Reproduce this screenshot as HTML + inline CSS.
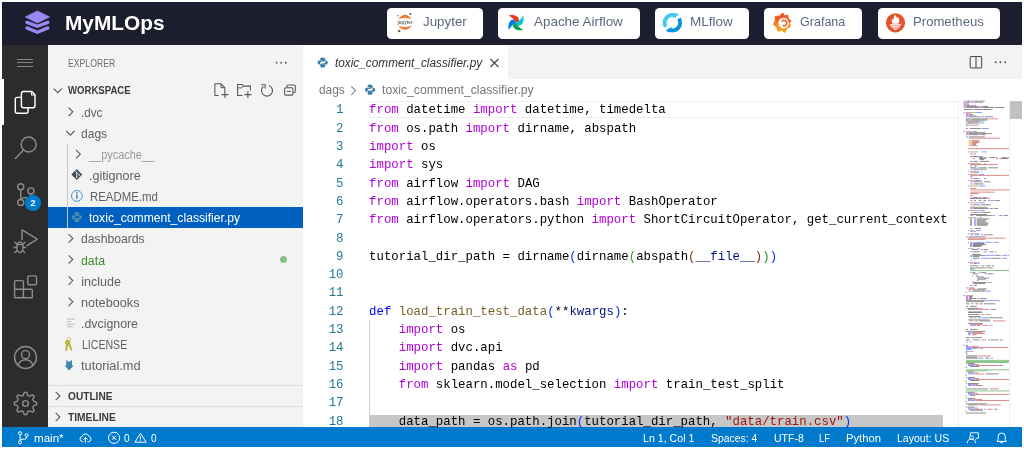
<!DOCTYPE html>
<html lang="en">
<head>
<meta charset="utf-8">
<title>MyMLOps</title>
<style>
html,body{margin:0;padding:0;background:#fff;}
body{filter:blur(0.4px);width:1024px;height:449px;position:relative;overflow:hidden;font-family:"Liberation Sans",sans-serif;}
.abs{position:absolute;}
#hdr{left:2px;top:2px;width:1020px;height:43px;background:#1c1e2f;}
#act{left:2px;top:45px;width:46px;height:382px;background:#2c2c2c;}
#side{left:48px;top:45px;width:255px;height:382px;background:#f3f3f3;}
#tabs{left:303px;top:45px;width:719px;height:34px;background:#f3f3f3;}
#tab{left:303px;top:45px;width:205px;height:34px;background:#fff;}
#stat{left:2px;top:427px;width:1020px;height:20px;background:#007acc;}
.hb{position:absolute;top:7.5px;height:31px;background:#fff;border-radius:4.5px;}
.t{position:absolute;white-space:nowrap;line-height:1;transform-origin:0 50%;}
.title{font-weight:bold;font-size:20px;color:#fff;}
.btn{font-size:13px;color:#5b6980;}
.exp{font-size:10.5px;color:#6f6f6f;}
.sec{font-size:10.5px;font-weight:bold;color:#3b3b3b;}
.tree{font-size:12.5px;color:#616161;}
.ign{color:#9a9a9a;}
.sel{color:#fff;}
.grn{color:#3c8a2e;}
.tab{font-size:12.5px;font-style:italic;color:#333;}
.bc{font-size:12.5px;color:#767676;}
.st{font-size:11.5px;color:#fff;}
.ln{position:absolute;left:303px;width:40.5px;text-align:right;font-family:"Liberation Mono",monospace;font-size:12.36px;line-height:18.3px;margin-top:-12.15px;color:#237893;}
.cl{position:absolute;left:369.1px;white-space:pre;font-family:"Liberation Mono",monospace;font-size:12.36px;line-height:18.3px;margin-top:-12.15px;color:#000;}
.ck{color:#af00db}.cd{color:#0000ff}.cn{color:#000}.cs{color:#a31515}.cf{color:#795e26}.cp{color:#001080}
.cb1{color:#0431fa}.cb2{color:#319331}.cb3{color:#7b3814}
svg{position:absolute;overflow:visible;}
</style>
</head>
<body>
<div id="hdr" class="abs"></div>
<div id="act" class="abs"></div>
<div id="side" class="abs"></div>
<div id="tabs" class="abs"></div>
<div id="tab" class="abs"></div>
<div id="stat" class="abs"></div>

<!-- header buttons -->
<div class="hb" style="left:387px;width:96px"></div>
<div class="hb" style="left:498px;width:141.7px"></div>
<div class="hb" style="left:654.8px;width:94.1px"></div>
<div class="hb" style="left:764px;width:98.2px"></div>
<div class="hb" style="left:877.8px;width:122.5px"></div>

<!-- sidebar decorations -->
<div class="abs" style="left:2px;top:78.5px;width:2px;height:46.5px;background:#fff"></div>
<div class="abs" style="left:48px;top:207.2px;width:255px;height:20.4px;background:#0060c0"></div>
<div class="abs" style="left:67px;top:143.5px;width:1px;height:84px;background:#c8c8c8"></div>
<div class="abs" style="left:48px;top:385px;width:255px;height:1px;background:#dedede"></div>
<div class="abs" style="left:48px;top:406px;width:255px;height:1px;background:#dedede"></div>
<div class="abs" style="left:279.7px;top:256.3px;width:7px;height:7px;border-radius:50%;background:#8cbf8a"></div>

<!-- editor decorations -->
<div class="abs" style="left:369px;top:100.8px;width:590px;height:17.2px;box-sizing:border-box;border:1.5px solid #eeeeee"></div>
<div class="abs" style="left:369px;top:415.4px;width:574px;height:11.6px;background:#c6c6c6"></div>
<div class="abs" style="left:369px;top:320px;width:1px;height:95.4px;background:#d3d3d3"></div>
<div class="abs" style="left:1009.3px;top:100.7px;width:12.7px;height:18.6px;background:#c1c1c1"></div>

<div class="abs" style="left:958.3px;top:100px;width:1px;height:327px;background:#efefef"></div>
<div class="abs" style="left:1008.8px;top:100px;width:1px;height:327px;background:#efefef"></div>
<svg style="left:0;top:0" width="1024" height="449" viewBox="0 0 1024 449"><g opacity="0.6"><rect x="963.68" y="100.70" width="2.10" height="0.85" fill="#af00db"/><rect x="966.30" y="100.70" width="4.19" height="0.85" fill="#222"/><rect x="971.02" y="100.70" width="3.14" height="0.85" fill="#af00db"/><rect x="974.69" y="100.70" width="4.72" height="0.85" fill="#222"/><rect x="979.93" y="100.70" width="4.72" height="0.85" fill="#222"/><rect x="963.68" y="101.74" width="2.10" height="0.85" fill="#af00db"/><rect x="966.30" y="101.74" width="3.67" height="0.85" fill="#222"/><rect x="970.49" y="101.74" width="3.14" height="0.85" fill="#af00db"/><rect x="974.16" y="101.74" width="4.19" height="0.85" fill="#222"/><rect x="978.88" y="101.74" width="3.67" height="0.85" fill="#222"/><rect x="963.68" y="102.79" width="3.14" height="0.85" fill="#af00db"/><rect x="967.35" y="102.79" width="1.05" height="0.85" fill="#222"/><rect x="963.68" y="103.83" width="3.14" height="0.85" fill="#af00db"/><rect x="967.35" y="103.83" width="1.57" height="0.85" fill="#222"/><rect x="963.68" y="104.88" width="2.10" height="0.85" fill="#af00db"/><rect x="966.30" y="104.88" width="3.67" height="0.85" fill="#222"/><rect x="970.49" y="104.88" width="3.14" height="0.85" fill="#af00db"/><rect x="974.16" y="104.88" width="1.57" height="0.85" fill="#222"/><rect x="963.68" y="105.92" width="2.10" height="0.85" fill="#af00db"/><rect x="966.30" y="105.92" width="11.53" height="0.85" fill="#222"/><rect x="978.35" y="105.92" width="3.14" height="0.85" fill="#af00db"/><rect x="982.02" y="105.92" width="6.29" height="0.85" fill="#222"/><rect x="963.68" y="106.96" width="2.10" height="0.85" fill="#af00db"/><rect x="966.30" y="106.96" width="12.58" height="0.85" fill="#222"/><rect x="979.40" y="106.96" width="3.14" height="0.85" fill="#af00db"/><rect x="983.07" y="106.96" width="11.00" height="0.85" fill="#222"/><rect x="994.60" y="106.96" width="9.96" height="0.85" fill="#222"/><rect x="963.68" y="109.05" width="8.91" height="0.85" fill="#222"/><rect x="973.11" y="109.05" width="0.52" height="0.85" fill="#222"/><rect x="974.16" y="109.05" width="18.34" height="0.85" fill="#222"/><rect x="963.68" y="112.18" width="1.57" height="0.85" fill="#1f3fff"/><rect x="965.78" y="112.18" width="10.48" height="0.85" fill="#8a6a2a"/><rect x="976.26" y="112.18" width="5.76" height="0.85" fill="#1f3fff"/><rect x="965.78" y="113.23" width="3.14" height="0.85" fill="#af00db"/><rect x="969.45" y="113.23" width="1.05" height="0.85" fill="#222"/><rect x="965.78" y="114.27" width="3.14" height="0.85" fill="#af00db"/><rect x="969.45" y="114.27" width="3.67" height="0.85" fill="#222"/><rect x="965.78" y="115.32" width="3.14" height="0.85" fill="#af00db"/><rect x="969.45" y="115.32" width="3.14" height="0.85" fill="#222"/><rect x="973.11" y="115.32" width="1.05" height="0.85" fill="#af00db"/><rect x="974.69" y="115.32" width="1.05" height="0.85" fill="#222"/><rect x="965.78" y="116.36" width="2.10" height="0.85" fill="#af00db"/><rect x="968.40" y="116.36" width="12.05" height="0.85" fill="#222"/><rect x="980.97" y="116.36" width="3.14" height="0.85" fill="#af00db"/><rect x="984.64" y="116.36" width="8.38" height="0.85" fill="#222"/><rect x="965.78" y="118.45" width="4.72" height="0.85" fill="#222"/><rect x="971.02" y="118.45" width="0.52" height="0.85" fill="#222"/><rect x="972.07" y="118.45" width="16.24" height="0.85" fill="#222"/><rect x="988.83" y="118.45" width="8.91" height="0.85" fill="#b5201f"/><rect x="965.78" y="119.49" width="2.10" height="0.85" fill="#222"/><rect x="968.40" y="119.49" width="0.52" height="0.85" fill="#222"/><rect x="969.45" y="119.49" width="11.53" height="0.85" fill="#222"/><rect x="981.50" y="119.49" width="6.29" height="0.85" fill="#222"/><rect x="965.78" y="120.54" width="3.14" height="0.85" fill="#222"/><rect x="969.45" y="120.54" width="2.10" height="0.85" fill="#222"/><rect x="972.07" y="120.54" width="0.52" height="0.85" fill="#222"/><rect x="973.11" y="120.54" width="8.91" height="0.85" fill="#222"/><rect x="982.02" y="120.54" width="2.62" height="0.85" fill="#1f3fff"/><rect x="967.87" y="121.58" width="7.34" height="0.85" fill="#222"/><rect x="975.73" y="121.58" width="3.14" height="0.85" fill="#222"/><rect x="965.78" y="122.62" width="12.58" height="0.85" fill="#222"/><rect x="978.88" y="122.62" width="3.14" height="0.85" fill="#1f3fff"/><rect x="982.02" y="122.62" width="2.62" height="0.85" fill="#1a8f1a"/><rect x="965.78" y="124.71" width="3.67" height="0.85" fill="#222"/><rect x="969.97" y="124.71" width="8.91" height="0.85" fill="#b5201f"/><rect x="966.02" y="128.00" width="2.00" height="0.85" fill="#af00db"/><rect x="969.69" y="128.00" width="11.02" height="0.85" fill="#222"/><rect x="981.38" y="128.00" width="7.35" height="0.85" fill="#1f3fff"/><rect x="963.35" y="131.20" width="1.67" height="0.85" fill="#1f3fff"/><rect x="966.02" y="131.20" width="5.34" height="0.85" fill="#8a6a2a"/><rect x="972.70" y="131.20" width="4.01" height="0.85" fill="#1f3fff"/><rect x="966.02" y="132.30" width="2.34" height="0.85" fill="#af00db"/><rect x="968.69" y="132.30" width="16.70" height="0.85" fill="#222"/><rect x="966.02" y="133.30" width="2.34" height="0.85" fill="#af00db"/><rect x="968.69" y="133.30" width="23.38" height="0.85" fill="#222"/><rect x="966.02" y="134.30" width="2.34" height="0.85" fill="#af00db"/><rect x="968.69" y="134.30" width="9.35" height="0.85" fill="#222"/><rect x="978.71" y="134.30" width="2.00" height="0.85" fill="#af00db"/><rect x="981.38" y="134.30" width="4.01" height="0.85" fill="#222"/><rect x="966.02" y="136.50" width="2.00" height="0.85" fill="#1f3fff"/><rect x="968.69" y="136.50" width="16.03" height="0.85" fill="#222"/><rect x="969.36" y="137.70" width="30.73" height="0.85" fill="#b5201f"/><rect x="968.69" y="139.90" width="2.67" height="0.85" fill="#d49a2a"/><rect x="971.70" y="139.90" width="7.68" height="0.85" fill="#b5201f"/><rect x="968.69" y="140.94" width="2.67" height="0.85" fill="#d49a2a"/><rect x="971.70" y="140.94" width="7.01" height="0.85" fill="#b5201f"/><rect x="968.69" y="141.99" width="2.67" height="0.85" fill="#d49a2a"/><rect x="971.70" y="141.99" width="8.02" height="0.85" fill="#b5201f"/><rect x="968.69" y="143.03" width="2.67" height="0.85" fill="#d49a2a"/><rect x="971.70" y="143.03" width="5.01" height="0.85" fill="#b5201f"/><rect x="968.69" y="144.08" width="2.67" height="0.85" fill="#d49a2a"/><rect x="971.70" y="144.08" width="4.34" height="0.85" fill="#b5201f"/><rect x="968.69" y="145.12" width="2.67" height="0.85" fill="#d49a2a"/><rect x="971.70" y="145.12" width="5.68" height="0.85" fill="#b5201f"/><rect x="967.69" y="148.30" width="41.31" height="0.85" fill="#b5201f"/><rect x="968.02" y="151.50" width="1.34" height="0.85" fill="#1f3fff"/><rect x="970.03" y="151.50" width="8.02" height="0.85" fill="#8a6a2a"/><rect x="981.38" y="151.50" width="5.34" height="0.85" fill="#1f3fff"/><rect x="970.03" y="153.50" width="2.67" height="0.85" fill="#af00db"/><rect x="973.70" y="153.50" width="2.00" height="0.85" fill="#222"/><rect x="970.03" y="156.20" width="8.68" height="0.85" fill="#222"/><rect x="978.71" y="156.20" width="4.01" height="0.85" fill="#1f3fff"/><rect x="978.71" y="157.20" width="4.68" height="0.85" fill="#222"/><rect x="984.06" y="157.20" width="2.67" height="0.85" fill="#b5201f"/><rect x="989.40" y="157.20" width="5.34" height="0.85" fill="#222"/><rect x="995.41" y="157.20" width="2.00" height="0.85" fill="#b5201f"/><rect x="1002.09" y="157.20" width="4.01" height="0.85" fill="#222"/><rect x="1006.77" y="157.20" width="2.23" height="0.85" fill="#b5201f"/><rect x="972.70" y="158.20" width="2.00" height="0.85" fill="#b5201f"/><rect x="979.38" y="158.20" width="6.68" height="0.85" fill="#222"/><rect x="996.08" y="158.20" width="2.00" height="0.85" fill="#b5201f"/><rect x="999.42" y="158.20" width="8.68" height="0.85" fill="#222"/><rect x="979.38" y="159.20" width="4.68" height="0.85" fill="#222"/><rect x="970.03" y="160.90" width="3.34" height="0.85" fill="#af00db"/><rect x="974.04" y="160.90" width="4.01" height="0.85" fill="#222"/><rect x="980.05" y="160.90" width="9.35" height="0.85" fill="#222"/><rect x="968.02" y="163.20" width="1.34" height="0.85" fill="#1f3fff"/><rect x="970.03" y="163.20" width="10.69" height="0.85" fill="#8a6a2a"/><rect x="984.06" y="163.20" width="1.34" height="0.85" fill="#1f3fff"/><rect x="970.03" y="164.20" width="27.39" height="0.85" fill="#b5201f"/><rect x="970.36" y="165.50" width="1.67" height="0.85" fill="#af00db"/><rect x="974.04" y="165.50" width="2.67" height="0.85" fill="#222"/><rect x="970.03" y="167.40" width="6.01" height="0.85" fill="#222"/><rect x="976.71" y="167.40" width="2.00" height="0.85" fill="#1f3fff"/><rect x="979.38" y="167.40" width="7.35" height="0.85" fill="#222"/><rect x="988.06" y="167.40" width="10.02" height="0.85" fill="#222"/><rect x="970.36" y="168.70" width="1.67" height="0.85" fill="#af00db"/><rect x="972.70" y="168.70" width="14.03" height="0.85" fill="#222"/><rect x="968.02" y="170.70" width="1.34" height="0.85" fill="#1f3fff"/><rect x="970.03" y="170.70" width="6.01" height="0.85" fill="#8a6a2a"/><rect x="976.71" y="170.70" width="2.00" height="0.85" fill="#1f3fff"/><rect x="980.72" y="170.70" width="1.34" height="0.85" fill="#1f3fff"/><rect x="970.36" y="171.90" width="3.01" height="0.85" fill="#af00db"/><rect x="974.04" y="171.90" width="4.68" height="0.85" fill="#222"/><rect x="968.02" y="173.90" width="1.34" height="0.85" fill="#1f3fff"/><rect x="970.03" y="173.90" width="7.35" height="0.85" fill="#8a6a2a"/><rect x="978.71" y="173.90" width="5.34" height="0.85" fill="#1f3fff"/><rect x="970.03" y="174.90" width="38.97" height="0.85" fill="#b5201f"/><rect x="970.36" y="176.10" width="2.34" height="0.85" fill="#af00db"/><rect x="970.36" y="178.20" width="3.01" height="0.85" fill="#af00db"/><rect x="974.04" y="178.20" width="4.01" height="0.85" fill="#222"/><rect x="978.71" y="178.20" width="1.34" height="0.85" fill="#af00db"/><rect x="984.06" y="178.20" width="2.00" height="0.85" fill="#222"/><rect x="968.02" y="180.20" width="1.34" height="0.85" fill="#1f3fff"/><rect x="970.03" y="180.20" width="6.01" height="0.85" fill="#8a6a2a"/><rect x="976.04" y="180.20" width="5.34" height="0.85" fill="#1f3fff"/><rect x="970.36" y="181.40" width="2.34" height="0.85" fill="#af00db"/><rect x="973.37" y="181.40" width="7.01" height="0.85" fill="#222"/><rect x="980.72" y="181.40" width="2.00" height="0.85" fill="#af00db"/><rect x="984.06" y="181.40" width="6.68" height="0.85" fill="#222"/><rect x="970.36" y="183.50" width="3.01" height="0.85" fill="#af00db"/><rect x="974.04" y="183.50" width="9.35" height="0.85" fill="#222"/><rect x="968.02" y="185.50" width="1.34" height="0.85" fill="#1f3fff"/><rect x="970.03" y="185.50" width="8.68" height="0.85" fill="#8a6a2a"/><rect x="979.38" y="185.50" width="6.01" height="0.85" fill="#1f3fff"/><rect x="970.36" y="187.90" width="5.68" height="0.85" fill="#b5201f"/><rect x="970.36" y="189.50" width="38.64" height="0.85" fill="#b5201f"/><rect x="970.36" y="191.70" width="24.38" height="0.85" fill="#b5201f"/><rect x="970.36" y="193.00" width="8.35" height="0.85" fill="#b5201f"/><rect x="970.36" y="194.90" width="3.01" height="0.85" fill="#b5201f"/><rect x="970.36" y="197.20" width="1.67" height="0.85" fill="#af00db"/><rect x="972.70" y="197.20" width="5.34" height="0.85" fill="#222"/><rect x="978.71" y="197.20" width="2.67" height="0.85" fill="#af00db"/><rect x="982.72" y="197.20" width="4.68" height="0.85" fill="#222"/><rect x="970.03" y="198.20" width="16.03" height="0.85" fill="#222"/><rect x="986.73" y="198.20" width="3.34" height="0.85" fill="#b5201f"/><rect x="970.36" y="200.20" width="2.34" height="0.85" fill="#af00db"/><rect x="974.04" y="200.20" width="2.00" height="0.85" fill="#222"/><rect x="978.71" y="200.20" width="2.67" height="0.85" fill="#222"/><rect x="983.39" y="200.20" width="2.67" height="0.85" fill="#222"/><rect x="988.06" y="200.20" width="2.00" height="0.85" fill="#222"/><rect x="990.74" y="200.20" width="3.34" height="0.85" fill="#1f3fff"/><rect x="994.74" y="200.20" width="5.34" height="0.85" fill="#222"/><rect x="968.02" y="202.40" width="1.34" height="0.85" fill="#1f3fff"/><rect x="970.03" y="202.40" width="8.02" height="0.85" fill="#8a6a2a"/><rect x="978.71" y="202.40" width="6.01" height="0.85" fill="#1f3fff"/><rect x="970.36" y="204.40" width="1.67" height="0.85" fill="#af00db"/><rect x="972.70" y="204.40" width="5.34" height="0.85" fill="#222"/><rect x="978.04" y="204.40" width="2.67" height="0.85" fill="#af00db"/><rect x="981.38" y="204.40" width="9.35" height="0.85" fill="#222"/><rect x="970.03" y="206.80" width="17.37" height="0.85" fill="#222"/><rect x="970.36" y="208.00" width="2.34" height="0.85" fill="#af00db"/><rect x="973.37" y="208.00" width="14.70" height="0.85" fill="#222"/><rect x="988.73" y="208.00" width="1.34" height="0.85" fill="#af00db"/><rect x="990.74" y="208.00" width="2.00" height="0.85" fill="#222"/><rect x="993.41" y="208.00" width="1.00" height="0.85" fill="#af00db"/><rect x="994.74" y="208.00" width="3.34" height="0.85" fill="#222"/><rect x="968.02" y="210.00" width="1.34" height="0.85" fill="#1f3fff"/><rect x="970.03" y="210.00" width="8.02" height="0.85" fill="#8a6a2a"/><rect x="978.71" y="210.00" width="6.01" height="0.85" fill="#1f3fff"/><rect x="970.36" y="211.90" width="1.67" height="0.85" fill="#af00db"/><rect x="972.70" y="211.90" width="5.34" height="0.85" fill="#222"/><rect x="978.04" y="211.90" width="2.67" height="0.85" fill="#af00db"/><rect x="981.38" y="211.90" width="9.35" height="0.85" fill="#222"/><rect x="970.03" y="214.10" width="16.70" height="0.85" fill="#222"/><rect x="970.36" y="215.20" width="3.01" height="0.85" fill="#af00db"/><rect x="976.04" y="215.20" width="16.70" height="0.85" fill="#222"/><rect x="993.07" y="215.20" width="2.00" height="0.85" fill="#1f3fff"/><rect x="998.08" y="215.20" width="1.34" height="0.85" fill="#af00db"/><rect x="1000.09" y="215.20" width="2.00" height="0.85" fill="#222"/><rect x="1002.76" y="215.20" width="1.00" height="0.85" fill="#af00db"/><rect x="1004.10" y="215.20" width="4.01" height="0.85" fill="#222"/><rect x="968.02" y="217.20" width="1.34" height="0.85" fill="#1f3fff"/><rect x="970.03" y="217.20" width="6.68" height="0.85" fill="#8a6a2a"/><rect x="979.38" y="217.20" width="2.00" height="0.85" fill="#1f3fff"/><rect x="970.03" y="218.50" width="2.00" height="0.85" fill="#222"/><rect x="974.04" y="218.50" width="2.00" height="0.85" fill="#1f3fff"/><rect x="976.71" y="218.50" width="12.69" height="0.85" fill="#222"/><rect x="970.03" y="219.54" width="2.00" height="0.85" fill="#222"/><rect x="974.04" y="219.54" width="2.00" height="0.85" fill="#1f3fff"/><rect x="976.71" y="219.54" width="10.02" height="0.85" fill="#222"/><rect x="970.03" y="220.59" width="2.00" height="0.85" fill="#222"/><rect x="974.04" y="220.59" width="2.00" height="0.85" fill="#1f3fff"/><rect x="976.71" y="220.59" width="8.68" height="0.85" fill="#222"/><rect x="970.03" y="221.63" width="2.00" height="0.85" fill="#222"/><rect x="974.04" y="221.63" width="2.00" height="0.85" fill="#1f3fff"/><rect x="976.71" y="221.63" width="9.69" height="0.85" fill="#222"/><rect x="970.03" y="222.68" width="2.00" height="0.85" fill="#222"/><rect x="974.04" y="222.68" width="2.00" height="0.85" fill="#1f3fff"/><rect x="976.71" y="222.68" width="12.02" height="0.85" fill="#222"/><rect x="970.03" y="223.72" width="2.00" height="0.85" fill="#222"/><rect x="974.04" y="223.72" width="2.00" height="0.85" fill="#1f3fff"/><rect x="976.71" y="223.72" width="11.36" height="0.85" fill="#222"/><rect x="970.03" y="224.76" width="2.00" height="0.85" fill="#222"/><rect x="974.04" y="224.76" width="2.00" height="0.85" fill="#1f3fff"/><rect x="976.71" y="224.76" width="10.69" height="0.85" fill="#222"/><rect x="970.36" y="227.90" width="2.34" height="0.85" fill="#af00db"/><rect x="975.04" y="227.90" width="6.01" height="0.85" fill="#222"/><rect x="968.02" y="230.00" width="1.34" height="0.85" fill="#1f3fff"/><rect x="970.03" y="230.00" width="4.01" height="0.85" fill="#8a6a2a"/><rect x="976.71" y="230.00" width="4.01" height="0.85" fill="#1f3fff"/><rect x="970.36" y="231.00" width="2.34" height="0.85" fill="#af00db"/><rect x="973.37" y="231.00" width="2.67" height="0.85" fill="#1f3fff"/><rect x="968.02" y="233.40" width="1.34" height="0.85" fill="#1f3fff"/><rect x="970.03" y="233.40" width="5.34" height="0.85" fill="#8a6a2a"/><rect x="975.37" y="233.40" width="4.01" height="0.85" fill="#1f3fff"/><rect x="970.36" y="234.40" width="3.01" height="0.85" fill="#af00db"/><rect x="974.70" y="234.40" width="4.01" height="0.85" fill="#1f3fff"/><rect x="980.72" y="234.40" width="2.67" height="0.85" fill="#af00db"/><rect x="984.06" y="234.40" width="8.68" height="0.85" fill="#222"/><rect x="966.02" y="236.50" width="2.00" height="0.85" fill="#1f3fff"/><rect x="968.69" y="236.50" width="16.70" height="0.85" fill="#222"/><rect x="968.02" y="237.70" width="37.41" height="0.85" fill="#b5201f"/><rect x="968.02" y="238.90" width="17.37" height="0.85" fill="#b5201f"/><rect x="968.02" y="241.90" width="1.34" height="0.85" fill="#1f3fff"/><rect x="970.36" y="241.90" width="3.01" height="0.85" fill="#8a6a2a"/><rect x="974.04" y="241.90" width="10.02" height="0.85" fill="#1f3fff"/><rect x="984.72" y="241.90" width="6.35" height="0.85" fill="#1f3fff"/><rect x="991.40" y="241.90" width="1.34" height="0.85" fill="#1a8f1a"/><rect x="994.08" y="241.90" width="4.68" height="0.85" fill="#1f3fff"/><rect x="970.03" y="243.00" width="2.00" height="0.85" fill="#1f3fff"/><rect x="972.70" y="243.00" width="11.36" height="0.85" fill="#222"/><rect x="970.03" y="244.04" width="2.00" height="0.85" fill="#1f3fff"/><rect x="972.70" y="244.04" width="13.36" height="0.85" fill="#222"/><rect x="970.03" y="245.09" width="2.00" height="0.85" fill="#1f3fff"/><rect x="972.70" y="245.09" width="10.02" height="0.85" fill="#222"/><rect x="970.03" y="246.13" width="2.00" height="0.85" fill="#1f3fff"/><rect x="972.70" y="246.13" width="8.02" height="0.85" fill="#222"/><rect x="968.02" y="248.20" width="1.34" height="0.85" fill="#1f3fff"/><rect x="970.03" y="248.20" width="3.34" height="0.85" fill="#8a6a2a"/><rect x="977.38" y="248.20" width="2.00" height="0.85" fill="#1f3fff"/><rect x="972.03" y="249.20" width="6.01" height="0.85" fill="#222"/><rect x="980.72" y="249.20" width="2.00" height="0.85" fill="#af00db"/><rect x="983.39" y="249.20" width="4.68" height="0.85" fill="#222"/><rect x="970.36" y="251.40" width="1.67" height="0.85" fill="#1f3fff"/><rect x="972.70" y="251.40" width="6.68" height="0.85" fill="#222"/><rect x="981.38" y="251.40" width="2.00" height="0.85" fill="#d49a2a"/><rect x="984.06" y="251.40" width="3.34" height="0.85" fill="#1f3fff"/><rect x="989.40" y="251.40" width="4.01" height="0.85" fill="#222"/><rect x="994.74" y="251.40" width="1.34" height="0.85" fill="#222"/><rect x="972.03" y="253.90" width="8.68" height="0.85" fill="#222"/><rect x="970.36" y="254.90" width="1.67" height="0.85" fill="#1f3fff"/><rect x="972.70" y="254.90" width="12.69" height="0.85" fill="#222"/><rect x="985.39" y="254.90" width="9.35" height="0.85" fill="#1f3fff"/><rect x="995.41" y="254.90" width="5.34" height="0.85" fill="#222"/><rect x="1002.09" y="254.90" width="5.34" height="0.85" fill="#1f3fff"/><rect x="1008.10" y="254.90" width="0.90" height="0.85" fill="#1f3fff"/><rect x="970.36" y="256.20" width="1.67" height="0.85" fill="#1f3fff"/><rect x="972.70" y="256.20" width="6.68" height="0.85" fill="#222"/><rect x="972.70" y="257.80" width="6.68" height="0.85" fill="#222"/><rect x="981.38" y="257.80" width="9.35" height="0.85" fill="#1f3fff"/><rect x="991.40" y="257.80" width="9.35" height="0.85" fill="#222"/><rect x="1002.09" y="257.80" width="4.68" height="0.85" fill="#1f3fff"/><rect x="970.36" y="259.80" width="1.67" height="0.85" fill="#af00db"/><rect x="974.04" y="259.80" width="1.34" height="0.85" fill="#1f3fff"/><rect x="968.02" y="262.00" width="1.34" height="0.85" fill="#1f3fff"/><rect x="970.03" y="262.00" width="7.35" height="0.85" fill="#8a6a2a"/><rect x="978.04" y="262.00" width="1.34" height="0.85" fill="#1f3fff"/><rect x="970.36" y="263.00" width="2.34" height="0.85" fill="#af00db"/><rect x="974.04" y="263.00" width="2.67" height="0.85" fill="#222"/><rect x="977.38" y="263.00" width="2.00" height="0.85" fill="#af00db"/><rect x="970.03" y="265.40" width="8.02" height="0.85" fill="#222"/><rect x="978.71" y="265.40" width="2.00" height="0.85" fill="#d49a2a"/><rect x="981.38" y="265.40" width="3.34" height="0.85" fill="#1f3fff"/><rect x="986.06" y="265.40" width="4.68" height="0.85" fill="#222"/><rect x="992.07" y="265.40" width="2.00" height="0.85" fill="#222"/><rect x="970.03" y="267.50" width="2.00" height="0.85" fill="#222"/><rect x="972.03" y="267.50" width="2.00" height="0.85" fill="#1f3fff"/><rect x="974.70" y="267.50" width="11.36" height="0.85" fill="#222"/><rect x="986.73" y="267.50" width="6.01" height="0.85" fill="#222"/><rect x="970.03" y="268.50" width="4.68" height="0.85" fill="#222"/><rect x="970.03" y="270.20" width="38.97" height="0.85" fill="#1a8f1a"/><rect x="970.36" y="272.20" width="1.67" height="0.85" fill="#af00db"/><rect x="972.70" y="272.20" width="2.67" height="0.85" fill="#222"/><rect x="978.71" y="272.20" width="1.34" height="0.85" fill="#1f3fff"/><rect x="980.72" y="272.20" width="5.34" height="0.85" fill="#222"/><rect x="972.70" y="273.40" width="5.34" height="0.85" fill="#222"/><rect x="984.72" y="273.40" width="2.00" height="0.85" fill="#1f3fff"/><rect x="987.40" y="273.40" width="6.01" height="0.85" fill="#222"/><rect x="972.03" y="275.50" width="1.34" height="0.85" fill="#af00db"/><rect x="976.04" y="275.50" width="2.00" height="0.85" fill="#222"/><rect x="976.71" y="276.50" width="2.00" height="0.85" fill="#222"/><rect x="978.71" y="276.50" width="3.34" height="0.85" fill="#1f3fff"/><rect x="982.05" y="276.50" width="2.00" height="0.85" fill="#222"/><rect x="977.38" y="277.60" width="5.34" height="0.85" fill="#222"/><rect x="982.72" y="277.60" width="6.68" height="0.85" fill="#222"/><rect x="977.38" y="278.70" width="8.68" height="0.85" fill="#222"/><rect x="976.71" y="279.80" width="2.00" height="0.85" fill="#222"/><rect x="972.03" y="281.00" width="1.34" height="0.85" fill="#af00db"/><rect x="973.37" y="282.20" width="12.69" height="0.85" fill="#222"/><rect x="986.73" y="282.20" width="5.34" height="0.85" fill="#1a8f1a"/><rect x="972.70" y="283.20" width="12.69" height="0.85" fill="#222"/><rect x="970.03" y="285.20" width="2.67" height="0.85" fill="#af00db"/><rect x="974.04" y="285.20" width="2.67" height="0.85" fill="#222"/><rect x="966.02" y="287.50" width="2.67" height="0.85" fill="#af00db"/><rect x="969.36" y="287.50" width="4.68" height="0.85" fill="#222"/><rect x="968.69" y="288.50" width="6.68" height="0.85" fill="#b5201f"/><rect x="977.38" y="288.50" width="9.35" height="0.85" fill="#222"/><rect x="968.69" y="289.50" width="2.67" height="0.85" fill="#b5201f"/><rect x="972.70" y="289.50" width="12.69" height="0.85" fill="#222"/><rect x="968.69" y="290.70" width="2.00" height="0.85" fill="#b5201f"/><rect x="972.03" y="290.70" width="12.02" height="0.85" fill="#222"/><rect x="984.06" y="290.70" width="6.68" height="0.85" fill="#1f3fff"/><rect x="965.69" y="291.90" width="1.00" height="0.85" fill="#222"/><rect x="963.35" y="295.00" width="1.67" height="0.85" fill="#1f3fff"/><rect x="966.02" y="295.00" width="7.35" height="0.85" fill="#8a6a2a"/><rect x="966.02" y="296.10" width="2.34" height="0.85" fill="#af00db"/><rect x="969.03" y="296.10" width="3.67" height="0.85" fill="#222"/><rect x="966.02" y="297.20" width="2.34" height="0.85" fill="#af00db"/><rect x="969.03" y="297.20" width="3.01" height="0.85" fill="#222"/><rect x="966.02" y="298.20" width="2.34" height="0.85" fill="#af00db"/><rect x="969.03" y="298.20" width="7.01" height="0.85" fill="#222"/><rect x="976.71" y="298.20" width="2.67" height="0.85" fill="#af00db"/><rect x="980.05" y="298.20" width="6.68" height="0.85" fill="#222"/><rect x="966.02" y="299.20" width="2.34" height="0.85" fill="#af00db"/><rect x="969.03" y="299.20" width="2.34" height="0.85" fill="#222"/><rect x="966.02" y="300.30" width="18.70" height="0.85" fill="#222"/><rect x="984.72" y="300.30" width="15.36" height="0.85" fill="#1f3fff"/><rect x="966.02" y="301.30" width="18.04" height="0.85" fill="#222"/><rect x="966.02" y="303.40" width="3.34" height="0.85" fill="#222"/><rect x="971.36" y="303.40" width="2.00" height="0.85" fill="#222"/><rect x="975.37" y="303.40" width="2.67" height="0.85" fill="#222"/><rect x="979.38" y="303.40" width="3.34" height="0.85" fill="#222"/><rect x="984.06" y="303.40" width="11.36" height="0.85" fill="#222"/><rect x="966.02" y="305.90" width="2.00" height="0.85" fill="#222"/><rect x="970.03" y="305.90" width="6.68" height="0.85" fill="#222"/><rect x="966.02" y="307.90" width="1.67" height="0.85" fill="#af00db"/><rect x="968.02" y="307.90" width="10.02" height="0.85" fill="#222"/><rect x="978.38" y="307.90" width="1.34" height="0.85" fill="#af00db"/><rect x="980.05" y="307.90" width="1.67" height="0.85" fill="#222"/><rect x="968.02" y="308.90" width="7.35" height="0.85" fill="#222"/><rect x="976.04" y="308.90" width="12.69" height="0.85" fill="#b5201f"/><rect x="990.74" y="308.90" width="5.34" height="0.85" fill="#222"/><rect x="968.02" y="311.50" width="14.03" height="0.85" fill="#222"/><rect x="968.02" y="312.10" width="14.03" height="0.85" fill="#222"/><rect x="968.02" y="314.00" width="11.36" height="0.85" fill="#222"/><rect x="981.38" y="314.00" width="3.34" height="0.85" fill="#b5201f"/><rect x="986.06" y="314.00" width="4.01" height="0.85" fill="#b5201f"/><rect x="968.02" y="316.20" width="12.69" height="0.85" fill="#222"/><rect x="970.03" y="317.40" width="2.67" height="0.85" fill="#222"/><rect x="974.04" y="317.40" width="2.67" height="0.85" fill="#b5201f"/><rect x="978.04" y="317.40" width="2.00" height="0.85" fill="#222"/><rect x="980.72" y="317.40" width="9.35" height="0.85" fill="#1f3fff"/><rect x="990.07" y="317.40" width="12.69" height="0.85" fill="#222"/><rect x="968.02" y="319.50" width="21.38" height="0.85" fill="#222"/><rect x="970.03" y="320.50" width="2.00" height="0.85" fill="#b5201f"/><rect x="975.37" y="320.50" width="2.00" height="0.85" fill="#b5201f"/><rect x="979.38" y="320.50" width="11.36" height="0.85" fill="#222"/><rect x="992.74" y="320.50" width="12.69" height="0.85" fill="#b5201f"/><rect x="968.02" y="322.90" width="14.70" height="0.85" fill="#222"/><rect x="970.03" y="323.90" width="12.69" height="0.85" fill="#b5201f"/><rect x="970.03" y="324.90" width="6.01" height="0.85" fill="#1f3fff"/><rect x="976.71" y="324.90" width="4.01" height="0.85" fill="#b5201f"/><rect x="982.72" y="324.90" width="5.34" height="0.85" fill="#b5201f"/><rect x="989.40" y="324.90" width="3.34" height="0.85" fill="#1f3fff"/><rect x="966.02" y="328.90" width="2.00" height="0.85" fill="#222"/><rect x="970.03" y="328.90" width="7.35" height="0.85" fill="#222"/><rect x="966.02" y="330.90" width="19.37" height="0.85" fill="#222"/><rect x="968.02" y="331.90" width="3.34" height="0.85" fill="#1f3fff"/><rect x="972.03" y="331.90" width="10.69" height="0.85" fill="#b5201f"/><rect x="968.02" y="333.10" width="3.34" height="0.85" fill="#1f3fff"/><rect x="972.03" y="333.10" width="12.69" height="0.85" fill="#b5201f"/><rect x="968.02" y="334.30" width="2.67" height="0.85" fill="#1f3fff"/><rect x="972.03" y="334.30" width="4.68" height="0.85" fill="#b5201f"/><rect x="966.02" y="337.20" width="4.01" height="0.85" fill="#222"/><rect x="971.36" y="337.20" width="10.69" height="0.85" fill="#222"/><rect x="966.02" y="339.50" width="3.34" height="0.85" fill="#222"/><rect x="972.70" y="339.50" width="6.01" height="0.85" fill="#222"/><rect x="978.71" y="339.50" width="1.34" height="0.85" fill="#1f3fff"/><rect x="981.38" y="339.50" width="4.68" height="0.85" fill="#b5201f"/><rect x="988.06" y="339.50" width="2.00" height="0.85" fill="#1f3fff"/><rect x="990.74" y="339.50" width="8.02" height="0.85" fill="#222"/><rect x="1000.09" y="339.50" width="2.67" height="0.85" fill="#222"/><rect x="966.02" y="341.50" width="2.00" height="0.85" fill="#af00db"/><rect x="969.36" y="341.50" width="2.00" height="0.85" fill="#1f3fff"/><rect x="963.35" y="344.90" width="2.00" height="0.85" fill="#af00db"/><rect x="966.02" y="344.90" width="2.00" height="0.85" fill="#222"/><rect x="966.02" y="345.90" width="3.34" height="0.85" fill="#1f3fff"/><rect x="970.03" y="345.90" width="8.68" height="0.85" fill="#b5201f"/><rect x="966.02" y="347.00" width="5.34" height="0.85" fill="#1f3fff"/><rect x="972.03" y="347.00" width="36.07" height="0.85" fill="#b5201f"/><rect x="966.02" y="348.20" width="10.02" height="0.85" fill="#1f3fff"/><rect x="976.71" y="348.20" width="1.34" height="0.85" fill="#1a8f1a"/><rect x="980.05" y="348.20" width="2.67" height="0.85" fill="#1f3fff"/><rect x="966.02" y="349.20" width="5.34" height="0.85" fill="#1f3fff"/><rect x="966.02" y="350.90" width="3.34" height="0.85" fill="#1f3fff"/><rect x="970.03" y="350.90" width="3.34" height="0.85" fill="#b5201f"/><rect x="965.35" y="351.90" width="1.34" height="0.85" fill="#222"/><rect x="966.02" y="353.40" width="2.00" height="0.85" fill="#af00db"/><rect x="966.02" y="355.50" width="11.36" height="0.85" fill="#222"/><rect x="978.04" y="355.50" width="12.69" height="0.85" fill="#b5201f"/><rect x="966.02" y="356.70" width="11.36" height="0.85" fill="#222"/><rect x="966.02" y="357.70" width="11.36" height="0.85" fill="#222"/><rect x="978.04" y="357.70" width="5.34" height="0.85" fill="#1f3fff"/><rect x="985.39" y="357.70" width="4.01" height="0.85" fill="#222"/><rect x="990.74" y="357.70" width="2.34" height="0.85" fill="#1f3fff"/><rect x="966.02" y="359.90" width="42.98" height="0.85" fill="#1a8f1a"/><rect x="966.02" y="361.00" width="42.98" height="0.85" fill="#1a8f1a"/><rect x="966.02" y="362.10" width="42.75" height="0.85" fill="#1a8f1a"/><rect x="966.02" y="363.10" width="1.34" height="0.85" fill="#222"/><rect x="968.02" y="363.10" width="6.68" height="0.85" fill="#222"/><rect x="968.02" y="364.20" width="4.01" height="0.85" fill="#1f3fff"/><rect x="972.03" y="364.20" width="6.68" height="0.85" fill="#b5201f"/><rect x="968.02" y="365.10" width="6.68" height="0.85" fill="#1f3fff"/><rect x="975.37" y="365.10" width="23.38" height="0.85" fill="#b5201f"/><rect x="999.42" y="365.10" width="3.34" height="0.85" fill="#222"/><rect x="970.03" y="366.10" width="9.35" height="0.85" fill="#222"/><rect x="965.35" y="367.10" width="1.34" height="0.85" fill="#222"/><rect x="966.02" y="369.40" width="42.98" height="0.85" fill="#1a8f1a"/><rect x="966.02" y="370.40" width="22.04" height="0.85" fill="#1a8f1a"/><rect x="966.02" y="371.50" width="1.34" height="0.85" fill="#222"/><rect x="968.02" y="371.50" width="6.01" height="0.85" fill="#222"/><rect x="968.02" y="372.50" width="4.01" height="0.85" fill="#1f3fff"/><rect x="972.70" y="372.50" width="5.34" height="0.85" fill="#b5201f"/><rect x="968.02" y="373.50" width="6.68" height="0.85" fill="#1f3fff"/><rect x="975.37" y="373.50" width="8.68" height="0.85" fill="#b5201f"/><rect x="985.39" y="373.50" width="13.36" height="0.85" fill="#222"/><rect x="965.35" y="374.70" width="1.34" height="0.85" fill="#222"/><rect x="966.02" y="377.00" width="1.34" height="0.85" fill="#222"/><rect x="968.02" y="377.00" width="6.68" height="0.85" fill="#222"/><rect x="968.02" y="378.00" width="4.01" height="0.85" fill="#1f3fff"/><rect x="972.70" y="378.00" width="6.01" height="0.85" fill="#b5201f"/><rect x="968.02" y="379.00" width="6.68" height="0.85" fill="#1f3fff"/><rect x="975.37" y="379.00" width="33.63" height="0.85" fill="#b5201f"/><rect x="970.03" y="380.00" width="9.35" height="0.85" fill="#222"/><rect x="965.35" y="381.00" width="1.34" height="0.85" fill="#222"/><rect x="966.02" y="383.10" width="1.34" height="0.85" fill="#222"/><rect x="968.02" y="383.10" width="10.69" height="0.85" fill="#222"/><rect x="968.02" y="384.10" width="4.01" height="0.85" fill="#1f3fff"/><rect x="972.70" y="384.10" width="5.34" height="0.85" fill="#b5201f"/><rect x="968.02" y="385.20" width="7.35" height="0.85" fill="#1f3fff"/><rect x="976.04" y="385.20" width="6.68" height="0.85" fill="#222"/><rect x="965.35" y="386.30" width="1.34" height="0.85" fill="#222"/><rect x="966.02" y="388.50" width="22.04" height="0.85" fill="#222"/><rect x="990.07" y="388.50" width="8.68" height="0.85" fill="#b5201f"/><rect x="966.02" y="390.50" width="42.98" height="0.85" fill="#1a8f1a"/><rect x="966.02" y="391.90" width="1.34" height="0.85" fill="#222"/><rect x="968.02" y="391.90" width="6.68" height="0.85" fill="#222"/><rect x="968.02" y="392.90" width="4.01" height="0.85" fill="#1f3fff"/><rect x="972.70" y="392.90" width="5.34" height="0.85" fill="#b5201f"/><rect x="968.02" y="393.90" width="6.68" height="0.85" fill="#1f3fff"/><rect x="975.37" y="393.90" width="33.63" height="0.85" fill="#b5201f"/><rect x="970.03" y="394.90" width="5.34" height="0.85" fill="#222"/><rect x="965.35" y="395.90" width="1.34" height="0.85" fill="#222"/><rect x="966.02" y="397.90" width="1.34" height="0.85" fill="#222"/><rect x="968.02" y="397.90" width="6.68" height="0.85" fill="#222"/><rect x="968.02" y="399.00" width="4.01" height="0.85" fill="#1f3fff"/><rect x="972.70" y="399.00" width="9.35" height="0.85" fill="#b5201f"/><rect x="968.02" y="400.10" width="6.68" height="0.85" fill="#1f3fff"/><rect x="975.37" y="400.10" width="33.63" height="0.85" fill="#b5201f"/><rect x="965.35" y="401.10" width="1.34" height="0.85" fill="#222"/><rect x="966.02" y="403.40" width="20.71" height="0.85" fill="#222"/><rect x="968.02" y="404.50" width="10.02" height="0.85" fill="#222"/><rect x="978.71" y="404.50" width="22.04" height="0.85" fill="#b5201f"/><rect x="966.02" y="406.70" width="1.34" height="0.85" fill="#222"/><rect x="968.02" y="406.70" width="6.68" height="0.85" fill="#222"/><rect x="968.02" y="407.70" width="4.01" height="0.85" fill="#1f3fff"/><rect x="972.70" y="407.70" width="5.34" height="0.85" fill="#b5201f"/><rect x="968.02" y="408.80" width="6.68" height="0.85" fill="#1f3fff"/><rect x="975.37" y="408.80" width="7.35" height="0.85" fill="#b5201f"/><rect x="984.06" y="408.80" width="2.00" height="0.85" fill="#1f3fff"/><rect x="987.40" y="408.80" width="5.34" height="0.85" fill="#b5201f"/><rect x="994.08" y="408.80" width="3.34" height="0.85" fill="#222"/><rect x="970.03" y="409.80" width="12.69" height="0.85" fill="#222"/><rect x="965.35" y="410.80" width="1.34" height="0.85" fill="#222"/><rect x="966.02" y="412.60" width="20.04" height="0.85" fill="#222"/></g></svg>
<div class="ln" style="top:113.02px">1</div>
<div class="cl" style="top:113.02px"><span class="ck">from</span><span class="cn"> datetime </span><span class="ck">import</span><span class="cn"> datetime, timedelta</span></div>
<div class="ln" style="top:132.02px">2</div>
<div class="cl" style="top:132.02px"><span class="ck">from</span><span class="cn"> os.path </span><span class="ck">import</span><span class="cn"> dirname, abspath</span></div>
<div class="ln" style="top:150.02px">3</div>
<div class="cl" style="top:150.02px"><span class="ck">import</span><span class="cn"> os</span></div>
<div class="ln" style="top:168.02px">4</div>
<div class="cl" style="top:168.02px"><span class="ck">import</span><span class="cn"> sys</span></div>
<div class="ln" style="top:187.02px">5</div>
<div class="cl" style="top:187.02px"><span class="ck">from</span><span class="cn"> airflow </span><span class="ck">import</span><span class="cn"> DAG</span></div>
<div class="ln" style="top:205.02px">6</div>
<div class="cl" style="top:205.02px"><span class="ck">from</span><span class="cn"> airflow.operators.bash </span><span class="ck">import</span><span class="cn"> BashOperator</span></div>
<div class="ln" style="top:223.02px">7</div>
<div class="cl" style="top:223.02px"><span class="ck">from</span><span class="cn"> airflow.operators.python </span><span class="ck">import</span><span class="cn"> ShortCircuitOperator, get_current_context</span></div>
<div class="ln" style="top:242.02px">8</div>
<div class="ln" style="top:260.02px">9</div>
<div class="cl" style="top:260.02px"><span class="cn">tutorial_dir_path = dirname</span><span class="cb1">(</span><span class="cn">dirname</span><span class="cb2">(</span><span class="cn">abspath</span><span class="cb3">(</span><span class="cp">__file__</span><span class="cb3">)</span><span class="cb2">)</span><span class="cb1">)</span></div>
<div class="ln" style="top:278.02px">10</div>
<div class="ln" style="top:296.02px">11</div>
<div class="ln" style="top:315.02px">12</div>
<div class="cl" style="top:315.02px"><span class="cd">def</span><span class="cn"> </span><span class="cf">load_train_test_data</span><span class="cb1">(</span><span class="cn">**</span><span class="cp">kwargs</span><span class="cb1">)</span><span class="cn">:</span></div>
<div class="ln" style="top:333.02px">13</div>
<div class="cl" style="top:333.02px"><span class="cn">    </span><span class="ck">import</span><span class="cn"> os</span></div>
<div class="ln" style="top:351.02px">14</div>
<div class="cl" style="top:351.02px"><span class="cn">    </span><span class="ck">import</span><span class="cn"> dvc.api</span></div>
<div class="ln" style="top:370.02px">15</div>
<div class="cl" style="top:370.02px"><span class="cn">    </span><span class="ck">import</span><span class="cn"> pandas </span><span class="ck">as</span><span class="cn"> pd</span></div>
<div class="ln" style="top:388.02px">16</div>
<div class="cl" style="top:388.02px"><span class="cn">    </span><span class="ck">from</span><span class="cn"> sklearn.model_selection </span><span class="ck">import</span><span class="cn"> train_test_split</span></div>
<div class="ln" style="top:406.02px">17</div>
<div class="ln" style="top:425.02px">18</div>
<div class="cl" style="top:425.02px"><span class="cn">    data_path = os.path.join</span><span class="cb1">(</span><span class="cn">tutorial_dir_path, </span><span class="cs">&quot;data/train.csv&quot;</span><span class="cb1">)</span></div>
<span id="title" class="t title" style="left:64.80px;top:13.03px;transform:scaleX(1.0412);">MyMLOps</span>
<span id="b1" class="t btn" style="left:422.60px;top:15.02px;transform:scaleX(1.0272);">Jupyter</span>
<span id="b2" class="t btn" style="left:534.00px;top:15.02px;transform:scaleX(1.0326);">Apache Airflow</span>
<span id="b3" class="t btn" style="left:690.30px;top:15.02px;transform:scaleX(1.0367);">MLflow</span>
<span id="b4" class="t btn" style="left:800.00px;top:15.02px;transform:scaleX(0.9642);">Grafana</span>
<span id="b5" class="t btn" style="left:913.20px;top:15.02px;transform:scaleX(1.0101);">Prometheus</span>
<span id="exp" class="t exp" style="left:68.20px;top:58.03px;transform:scaleX(0.8254);">EXPLORER</span>
<span id="ws" class="t sec" style="left:68.20px;top:85.03px;transform:scaleX(0.9120);">WORKSPACE</span>
<span id="r0" class="t tree" style="left:81.30px;top:107.02px;transform:scaleX(0.9286);">.dvc</span>
<span id="r1" class="t tree" style="left:81.30px;top:128.02px;transform:scaleX(0.9628);">dags</span>
<span id="r2" class="t tree ign" style="left:89.40px;top:149.02px;transform:scaleX(0.8753);">__pycache__</span>
<span id="r3" class="t tree" style="left:89.40px;top:170.02px;transform:scaleX(1.0070);">.gitignore</span>
<span id="r4" class="t tree" style="left:89.60px;top:191.02px;transform:scaleX(0.9122);">README.md</span>
<span id="r5" class="t tree sel" style="left:89.40px;top:212.02px;transform:scaleX(0.9709);">toxic_comment_classifier.py</span>
<span id="r6" class="t tree" style="left:81.30px;top:233.02px;transform:scaleX(0.9751);">dashboards</span>
<span id="r7" class="t tree grn" style="left:81.30px;top:255.02px;transform:scaleX(0.9859);">data</span>
<span id="r8" class="t tree" style="left:81.30px;top:276.02px;">include</span>
<span id="r9" class="t tree" style="left:81.30px;top:297.02px;transform:scaleX(1.0141);">notebooks</span>
<span id="r10" class="t tree" style="left:81.30px;top:318.02px;transform:scaleX(0.9881);">.dvcignore</span>
<span id="r11" class="t tree" style="left:81.60px;top:339.02px;transform:scaleX(0.8449);">LICENSE</span>
<span id="r12" class="t tree" style="left:81.30px;top:360.02px;transform:scaleX(1.0195);">tutorial.md</span>
<span id="ol" class="t sec" style="left:67.70px;top:391.03px;transform:scaleX(0.9654);">OUTLINE</span>
<span id="tl" class="t sec" style="left:67.70px;top:412.03px;transform:scaleX(0.9735);">TIMELINE</span>
<span id="tabt" class="t tab" style="left:334.50px;top:57.02px;transform:scaleX(0.9445);">toxic_comment_classifier.py</span>
<span id="bc1" class="t bc" style="left:318.90px;top:84.02px;transform:scaleX(0.9517);">dags</span>
<span id="bc2" class="t bc" style="left:382.00px;top:84.02px;transform:scaleX(0.9741);">toxic_comment_classifier.py</span>
<span id="s1" class="t st" style="left:33.50px;top:433.02px;transform:scaleX(1.0066);">main*</span>
<span id="s2" class="t st" style="left:124.30px;top:433.02px;transform:scaleX(0.8741);">0</span>
<span id="s3" class="t st" style="left:150.50px;top:433.02px;transform:scaleX(0.8741);">0</span>
<span id="s4" class="t st" style="left:642.70px;top:433.02px;transform:scaleX(0.9240);">Ln 1, Col 1</span>
<span id="s5" class="t st" style="left:711.00px;top:433.02px;transform:scaleX(0.9051);">Spaces: 4</span>
<span id="s6" class="t st" style="left:773.60px;top:433.02px;transform:scaleX(0.9143);">UTF-8</span>
<span id="s7" class="t st" style="left:819.40px;top:433.02px;transform:scaleX(0.8121);">LF</span>
<span id="s8" class="t st" style="left:846.00px;top:433.02px;transform:scaleX(0.9773);">Python</span>
<span id="s9" class="t st" style="left:897.40px;top:433.02px;transform:scaleX(0.9173);">Layout: US</span>
<svg style="left:0;top:0" width="1024" height="449" viewBox="0 0 1024 449"><polygon points="25.3,16.9 37.4,10.9 49.5,16.9 37.4,23" fill="#9a87f6" stroke="#9a87f6" stroke-width="0.7" stroke-linejoin="round"/><path d="M26.9,22.40 L37.4,26.30 L47.9,22.40" fill="none" stroke="#9a87f6" stroke-width="3.3" stroke-linecap="round" stroke-linejoin="miter"/><path d="M26.9,27.90 L37.4,32.20 L47.9,27.90" fill="none" stroke="#9a87f6" stroke-width="3.3" stroke-linecap="round" stroke-linejoin="miter"/><path d="M398.3 19.2 Q405 10.2 411.7 19.2 Q405 16.2 398.3 19.2Z" fill="#f37726"/><path d="M398.3 25.4 Q405 34.2 411.7 25.4 Q405 28.4 398.3 25.4Z" fill="#f37726"/><circle cx="410.4" cy="14.1" r="1.05" fill="#616262"/><circle cx="398" cy="15.7" r="0.75" fill="#6f7070"/><circle cx="399.2" cy="30.9" r="1.25" fill="#616262"/><text x="404.9" y="23.6" font-family="Liberation Sans, sans-serif" font-size="4.9" font-weight="bold" fill="#6b6b6b" text-anchor="middle" textLength="15" lengthAdjust="spacingAndGlyphs">jupyter</text><path d="M-7.2,-7.2 C-3,-8.4 2.2,-7.2 3.1,-3 C3.3,-1.4 1.2,-0.5 0,0 C-1.4,-3 -4,-5.4 -7.2,-7.2Z" fill="#e43921" transform="translate(516 22.7) rotate(0)"/><path d="M-7.2,-7.2 C-3,-8.4 2.2,-7.2 3.1,-3 C3.3,-1.4 1.2,-0.5 0,0 C-1.4,-3 -4,-5.4 -7.2,-7.2Z" fill="#00c7d4" transform="translate(516 22.7) rotate(90)"/><path d="M-7.2,-7.2 C-3,-8.4 2.2,-7.2 3.1,-3 C3.3,-1.4 1.2,-0.5 0,0 C-1.4,-3 -4,-5.4 -7.2,-7.2Z" fill="#04a54f" transform="translate(516 22.7) rotate(180)"/><path d="M-7.2,-7.2 C-3,-8.4 2.2,-7.2 3.1,-3 C3.3,-1.4 1.2,-0.5 0,0 C-1.4,-3 -4,-5.4 -7.2,-7.2Z" fill="#017cee" transform="translate(516 22.7) rotate(270)"/><path d="M665.87 26.78 A7.70 7.70 0 0 1 676.25 16.03" fill="none" stroke="#43c9ed" stroke-width="4.00"/><path d="M678.93 18.62 A7.70 7.70 0 0 1 668.55 29.37" fill="none" stroke="#0194e2" stroke-width="4.00"/><polygon points="675.2,13.0 679.2,14.6 672.6,18.6 673.6,16.6" fill="#43c9ed"/><polygon points="669.6,32.4 665.6,30.8 672.2,26.8 671.2,28.8" fill="#0194e2"/><defs><linearGradient id="gg" x1="0" y1="0" x2="0" y2="1"><stop offset="0" stop-color="#ee4b23"/><stop offset="0.45" stop-color="#f26a22"/><stop offset="0.62" stop-color="#f7941d"/><stop offset="1" stop-color="#f9a51a"/></linearGradient></defs><polygon points="782.72,12.91 784.64,15.92 787.84,15.03 788.25,18.72 790.84,20.65 789.47,23.50 790.63,26.73 786.94,28.35 785.01,32.60 781.69,30.08 778.38,31.39 776.45,27.29 773.24,24.38 775.20,20.73 775.33,16.39 779.47,16.03" fill="url(#gg)" stroke="url(#gg)" stroke-width="0.9" stroke-linejoin="round"/><circle cx="783.6" cy="23.1" r="5.3" fill="#fff"/><path d="M781.76 21.65 A2.70 2.70 0 1 1 782.75 25.34" fill="none" stroke="#f26a22" stroke-width="1.70"/><path d="M787.4 19.6 L790.6 20.2 L790.9 22.2 L788.4 21.6Z" fill="#f05a28"/><circle cx="895.5" cy="22.8" r="9.6" fill="#e6522c"/><path d="M895.4 14.8 C896.6 16.4 896.2 17.6 897 18.4 C897.6 17.8 897.6 17 897.5 16.4 C899 18 899.6 20 899.2 21.6 C899 22.6 898.6 23.2 898.2 23.8 L892.8 23.8 C892.2 23 891.6 22 891.7 20.6 C891.8 19.6 892.2 19 892.6 18.4 C892.8 19.2 893 19.8 893.6 20.2 C893.4 18 894.2 16 895.4 14.8Z" fill="#fff"/><rect x="890" y="24.2" width="11" height="1.3" fill="#fff"/><rect x="891.2" y="26.2" width="8.6" height="1.3" fill="#fff"/><path d="M892.8 28.2 L898.2 28.2 Q895.5 31.4 892.8 28.2Z" fill="#fff"/></svg>
<div class="abs" style="left:16.7px;top:58.5px;width:16.7px;height:1.15px;background:#868686"></div><div class="abs" style="left:16.7px;top:62.3px;width:16.7px;height:1.15px;background:#868686"></div><div class="abs" style="left:16.7px;top:65.9px;width:16.7px;height:1.15px;background:#868686"></div>
<svg style="left:0;top:0" width="1024" height="449" viewBox="0 0 1024 449"><g fill="none" stroke="#ffffff" stroke-width="1.44" stroke-linejoin="round" stroke-linecap="round"><path d="M23.4 91.5 H31.8 L35 94.7 V105.7 a2 2 0 0 1 -2 2 H23.4 a2 2 0 0 1 -2 -2 V93.5 a2 2 0 0 1 2 -2 Z"/><path d="M31.6 91.9 V95 H34.7" stroke-width="1.1"/><path d="M21.2 97.4 H17.3 a2 2 0 0 0 -2 2 V111.2 a2 2 0 0 0 2 2 H26.1 a2 2 0 0 0 2 -2 V108"/></g></svg>
<svg style="left:13.50px;top:136.20px" width="23.00" height="23.00" viewBox="0 0 16 16" ><g fill="none" stroke="#8c8c8c" stroke-width="1" stroke-linejoin="round" stroke-linecap="round"><circle cx="10.2" cy="5.9" r="5.2"/><path d="M6.6 9.7 L1 15.6"/></g></svg>
<svg style="left:13.50px;top:182.90px" width="23.00" height="23.00" viewBox="0 0 16 16" ><g fill="none" stroke="#8c8c8c" stroke-width="1" stroke-linejoin="round" stroke-linecap="round"><circle cx="4.7" cy="2.6" r="2.1"/><circle cx="4.7" cy="13.6" r="2.1"/><circle cx="11.8" cy="5.5" r="2.1"/><path d="M4.7 4.7 V11.5"/><path d="M11.8 7.6 v0.2 a2.4 2.4 0 0 1 -2.4 2.4 h-2.3 a2.4 2.4 0 0 0 -2.4 1.3"/></g></svg>
<div class="abs" style="left:25.3px;top:195.3px;width:15.4px;height:15.4px;border-radius:50%;background:#007acc"></div>
<span class="t" style="left:30.5px;top:198.6px;font-size:9px;font-weight:bold;color:#fff">2</span>
<svg style="left:13.50px;top:228.80px" width="23.00" height="23.00" viewBox="0 0 16 16" ><g fill="none" stroke="#8c8c8c" stroke-width="1" stroke-linejoin="round" stroke-linecap="round"><path d="M5.6 7.4 V0.6 L16.2 7.1 L9.1 11.5"/><ellipse cx="4.1" cy="12.7" rx="2.2" ry="3.6"/><path d="M2 10.8 h4.2"/><path d="M1.9 12.9 H0 M6.3 12.9 H8.2 M2.2 10.6 L0.6 9.2 M6 10.6 L7.6 9.2 M2.3 15 L0.7 16.4 M5.9 15 L7.5 16.4"/></g></svg>
<svg style="left:0;top:0" width="1024" height="449" viewBox="0 0 1024 449"><g fill="none" stroke="#8c8c8c" stroke-width="1.44" stroke-linejoin="round"><path d="M14.6 281.4 a0.8 0.8 0 0 1 0.8 -0.8 h7.2 a0.8 0.8 0 0 1 0.8 0.8 v7.8 h8.1 a0.8 0.8 0 0 1 0.8 0.8 v7 a0.8 0.8 0 0 1 -0.8 0.8 h-16.1 a0.8 0.8 0 0 1 -0.8 -0.8 Z M14.6 289.2 h8.8 v8.6"/><rect x="27.8" y="275.9" width="8.7" height="8.8" rx="1"/></g></svg>
<svg style="left:13.50px;top:345.70px" width="23.00" height="23.00" viewBox="0 0 16 16" ><g fill="none" stroke="#8c8c8c" stroke-width="1" stroke-linejoin="round" stroke-linecap="round"><circle cx="8" cy="8" r="7.6"/><circle cx="8" cy="6" r="2.8"/><path d="M2.9 13.4 a5.3 5.3 0 0 1 10.2 0"/></g></svg>
<svg style="left:13.50px;top:392.20px" width="23.00" height="23.00" viewBox="0 0 16 16" ><g fill="none" stroke="#8c8c8c" stroke-width="1" stroke-linejoin="round" stroke-linecap="round"><polygon points="15.76,7.24 15.76,8.76 13.55,9.68 13.12,10.73 14.03,12.95 12.95,14.03 10.73,13.12 9.68,13.55 8.76,15.76 7.24,15.76 6.32,13.55 5.27,13.12 3.05,14.03 1.97,12.95 2.88,10.73 2.45,9.68 0.24,8.76 0.24,7.24 2.45,6.32 2.88,5.27 1.97,3.05 3.05,1.97 5.27,2.88 6.32,2.45 7.24,0.24 8.76,0.24 9.68,2.45 10.73,2.88 12.95,1.97 14.03,3.05 13.12,5.27 13.55,6.32"/><circle cx="8" cy="8" r="2.0"/></g></svg>
<svg style="left:0;top:0" width="1024" height="449" viewBox="0 0 1024 449"><path d="M53.70 88.60 L57.80 92.70 L61.90 88.60" fill="none" stroke="#5a5a5a" stroke-width="1.10"/><path d="M68.60 107.60 L72.80 111.80 L68.60 116.00" fill="none" stroke="#5a5a5a" stroke-width="1.10"/><path d="M66.30 131.00 L70.40 135.10 L74.50 131.00" fill="none" stroke="#5a5a5a" stroke-width="1.10"/><path d="M76.10 150.00 L80.30 154.20 L76.10 158.40" fill="none" stroke="#5a5a5a" stroke-width="1.10"/><path d="M68.60 234.20 L72.80 238.40 L68.60 242.60" fill="none" stroke="#5a5a5a" stroke-width="1.10"/><path d="M68.60 255.30 L72.80 259.50 L68.60 263.70" fill="none" stroke="#5a5a5a" stroke-width="1.10"/><path d="M68.60 276.40 L72.80 280.60 L68.60 284.80" fill="none" stroke="#5a5a5a" stroke-width="1.10"/><path d="M68.60 297.60 L72.80 301.80 L68.60 306.00" fill="none" stroke="#5a5a5a" stroke-width="1.10"/><path d="M55.70 391.80 L59.90 396.00 L55.70 400.20" fill="none" stroke="#5a5a5a" stroke-width="1.10"/><path d="M55.70 412.80 L59.90 417.00 L55.70 421.20" fill="none" stroke="#5a5a5a" stroke-width="1.10"/><circle cx="276.6" cy="62.8" r="0.95" fill="#5a5a5a"/><circle cx="281.2" cy="62.8" r="0.95" fill="#5a5a5a"/><circle cx="285.8" cy="62.8" r="0.95" fill="#5a5a5a"/><path d="M218.6 95.4 H214.9 V83.8 H221 L224.8 87.6 V91" fill="none" stroke="#555" stroke-width="1.05"/><path d="M221 83.9 V87.7 H224.7" fill="none" stroke="#555" stroke-width="1"/><path d="M221.4 94.6 H228.4 M224.9 91.1 V98.1" fill="none" stroke="#555" stroke-width="1.05"/><path d="M242.6 95.4 H237.6 V84.4 H242.2 L243.4 86.1 H250.4 V90.4" fill="none" stroke="#555" stroke-width="1.05"/><path d="M237.6 87.9 H241.8 L243.2 86.4" fill="none" stroke="#555" stroke-width="0.9"/><path d="M244.4 94.6 H251.4 M247.9 91.1 V98.1" fill="none" stroke="#555" stroke-width="1.05"/><path d="M268.88 85.43 A5.50 5.50 0 1 1 263.32 86.51" fill="none" stroke="#555" stroke-width="1.10"/><path d="M261.2 84.8 H265.1 V88.6" fill="none" stroke="#555" stroke-width="1.1"/><rect x="284.6" y="87.7" width="8.3" height="7.4" rx="1.2" fill="none" stroke="#555" stroke-width="1.05"/><path d="M287 87.2 V86.2 A1.2 1.2 0 0 1 288.2 85 H294.1 A1.2 1.2 0 0 1 295.3 86.2 V91.2 A1.2 1.2 0 0 1 294.1 92.4 H293.3" fill="none" stroke="#555" stroke-width="1.05"/><path d="M286.7 91.4 H290.9" fill="none" stroke="#555" stroke-width="1.05"/><polygon points="71.7,174.5 76.8,169.4 81.9,174.5 76.8,179.7" fill="#3c4b55" stroke="#3c4b55" stroke-width="0.6" stroke-linejoin="round"/><path d="M75.4 171.2 L79.3 175.1 M76.6 172.6 V177.4" fill="none" stroke="#f3f3f3" stroke-width="0.85"/><circle cx="76.6" cy="177.3" r="0.75" fill="#f3f3f3"/><circle cx="79.1" cy="175" r="0.75" fill="#f3f3f3"/><circle cx="76.6" cy="172.6" r="0.7" fill="#f3f3f3"/><circle cx="76.9" cy="195.9" r="5.4" fill="none" stroke="#4f93c4" stroke-width="1"/><circle cx="76.9" cy="192.9" r="0.85" fill="#3f7fb5"/><rect x="76.15" y="194.5" width="1.5" height="4.4" fill="#3f7fb5"/><g transform="translate(71.80 212.10) scale(1.020)" fill="#4a8fa8"><path d="M4.9 0 C3.2 0 2.6 0.7 2.6 1.6 V2.7 H5 V3.1 H1.6 C0.6 3.1 0 3.9 0 5 C0 6.1 0.6 6.9 1.6 6.9 H2.5 V5.7 C2.5 4.8 3.3 4.1 4.2 4.1 H6 C6.8 4.1 7.4 3.5 7.4 2.7 V1.6 C7.4 0.7 6.6 0 4.9 0 Z"/><path d="M4.9 0 C3.2 0 2.6 0.7 2.6 1.6 V2.7 H5 V3.1 H1.6 C0.6 3.1 0 3.9 0 5 C0 6.1 0.6 6.9 1.6 6.9 H2.5 V5.7 C2.5 4.8 3.3 4.1 4.2 4.1 H6 C6.8 4.1 7.4 3.5 7.4 2.7 V1.6 C7.4 0.7 6.6 0 4.9 0 Z" transform="rotate(180 5 5)"/></g><g transform="translate(317.60 57.40) scale(1.020)" fill="#3a7ea6"><path d="M4.9 0 C3.2 0 2.6 0.7 2.6 1.6 V2.7 H5 V3.1 H1.6 C0.6 3.1 0 3.9 0 5 C0 6.1 0.6 6.9 1.6 6.9 H2.5 V5.7 C2.5 4.8 3.3 4.1 4.2 4.1 H6 C6.8 4.1 7.4 3.5 7.4 2.7 V1.6 C7.4 0.7 6.6 0 4.9 0 Z"/><path d="M4.9 0 C3.2 0 2.6 0.7 2.6 1.6 V2.7 H5 V3.1 H1.6 C0.6 3.1 0 3.9 0 5 C0 6.1 0.6 6.9 1.6 6.9 H2.5 V5.7 C2.5 4.8 3.3 4.1 4.2 4.1 H6 C6.8 4.1 7.4 3.5 7.4 2.7 V1.6 C7.4 0.7 6.6 0 4.9 0 Z" transform="rotate(180 5 5)"/></g><g transform="translate(365.00 84.60) scale(1.020)" fill="#3a7ea6"><path d="M4.9 0 C3.2 0 2.6 0.7 2.6 1.6 V2.7 H5 V3.1 H1.6 C0.6 3.1 0 3.9 0 5 C0 6.1 0.6 6.9 1.6 6.9 H2.5 V5.7 C2.5 4.8 3.3 4.1 4.2 4.1 H6 C6.8 4.1 7.4 3.5 7.4 2.7 V1.6 C7.4 0.7 6.6 0 4.9 0 Z"/><path d="M4.9 0 C3.2 0 2.6 0.7 2.6 1.6 V2.7 H5 V3.1 H1.6 C0.6 3.1 0 3.9 0 5 C0 6.1 0.6 6.9 1.6 6.9 H2.5 V5.7 C2.5 4.8 3.3 4.1 4.2 4.1 H6 C6.8 4.1 7.4 3.5 7.4 2.7 V1.6 C7.4 0.7 6.6 0 4.9 0 Z" transform="rotate(180 5 5)"/></g><path d="M66.9 319.1 H74.7" stroke="#c2c2c2" stroke-width="1.2"/><path d="M66.9 321.6 H71.1" stroke="#c2c2c2" stroke-width="1.2"/><path d="M66.9 324.2 H74.7" stroke="#c2c2c2" stroke-width="1.2"/><path d="M66.9 326.7 H72.7" stroke="#c2c2c2" stroke-width="1.2"/><circle cx="68.9" cy="339.2" r="1.9" fill="none" stroke="#c9c77a" stroke-width="0.9"/><circle cx="67.7" cy="342.6" r="2.6" fill="#b4b62e"/><path d="M67.3 343 L66.2 350 M68.6 343 L71.3 349.6" fill="none" stroke="#b4b62e" stroke-width="1.9" stroke-linecap="round"/><polygon points="66.2,360.1 69.1,361.9 72,360.1 72,365.4 73.8,365.4 69.1,370.6 64.6,365.4 66.2,365.4" fill="#3f87a8"/><path d="M490.4 59 L498.4 67 M498.4 59 L490.4 67" fill="none" stroke="#444" stroke-width="1.1"/><path d="M351.3 86.4 L355.5 90.6 L351.3 94.8" fill="none" stroke="#7d7d7d" stroke-width="1.05"/><rect x="970.2" y="56.4" width="11.5" height="11.5" rx="1.2" fill="none" stroke="#4a4a4a" stroke-width="1.05"/><path d="M976 56.4 V67.9" stroke="#4a4a4a" stroke-width="1.05"/><circle cx="995.6" cy="62.2" r="0.95" fill="#4a4a4a"/><circle cx="1000.4" cy="62.2" r="0.95" fill="#4a4a4a"/><circle cx="1005.2" cy="62.2" r="0.95" fill="#4a4a4a"/><circle cx="20.1" cy="433.2" r="1.55" fill="none" stroke="#fff" stroke-width="1"/><circle cx="20.1" cy="442.3" r="1.55" fill="none" stroke="#fff" stroke-width="1"/><circle cx="26.6" cy="435.2" r="1.55" fill="none" stroke="#fff" stroke-width="1"/><path d="M20.1 434.8 V440.7 M26.6 436.8 V437.2 A2 2 0 0 1 24.6 439.2 H22.1 A2 2 0 0 0 20.1 440.6" fill="none" stroke="#fff" stroke-width="1"/><path d="M83.2 441.6 H82.3 A2.6 2.6 0 0 1 82 436.5 A3.7 3.7 0 0 1 89 436.3 A2.7 2.7 0 0 1 88.6 441.6 H87.6" fill="none" stroke="#fff" stroke-width="1"/><path d="M85.4 442.6 V437.6 M83.3 439.6 L85.4 437.5 L87.5 439.6" fill="none" stroke="#fff" stroke-width="1"/><circle cx="114.1" cy="437.8" r="5.6" fill="none" stroke="#fff" stroke-width="1"/><path d="M111.9 435.6 L116.3 440 M116.3 435.6 L111.9 440" stroke="#fff" stroke-width="1" fill="none"/><path d="M140.5 433.2 L146.1 442.2 H134.9 Z" fill="none" stroke="#fff" stroke-width="1" stroke-linejoin="round"/><path d="M140.5 436.2 V439.6" stroke="#fff" stroke-width="1"/><circle cx="140.5" cy="440.8" r="0.55" fill="#fff"/><path d="M970.4 436.2 V432.8 H978.4 V438.2 H976.6 L975.4 439.6" fill="none" stroke="#fff" stroke-width="0.95"/><circle cx="971.4" cy="437.6" r="1.9" fill="#007acc" stroke="#fff" stroke-width="0.95"/><path d="M967.3 443.2 A4.1 4.1 0 0 1 975.5 443.2" fill="none" stroke="#fff" stroke-width="0.95"/><path d="M997 441.4 H1006.4 L1005.3 439.6 V436.6 A3.6 3.6 0 0 0 998.1 436.6 V439.6 Z" fill="none" stroke="#fff" stroke-width="1" stroke-linejoin="round"/><path d="M1000.6 442 A1.1 1.1 0 0 0 1002.8 442" fill="#fff" stroke="#fff" stroke-width="0.6"/></svg>
</body>
</html>
